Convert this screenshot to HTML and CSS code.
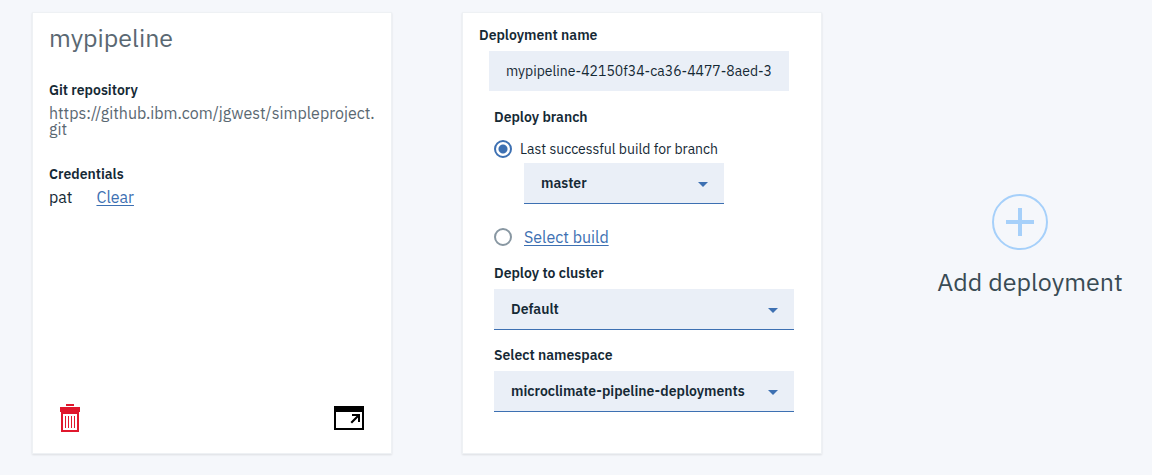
FILE: index.html
```html
<!DOCTYPE html>
<html lang="en">
<head>
<meta charset="utf-8">
<meta name="viewport" content="width=device-width, initial-scale=1">
<title>mypipeline</title>
<link rel="stylesheet" href="styles.css">
</head>
<body>
<main class="board">
  <section class="card pipeline">
    <h1 class="pipeline-name">mypipeline</h1>
    <h2 class="label">Git repository</h2>
    <p class="repo">https://github.ibm.com/jgwest/simpleproject.<wbr>git</p>
    <h2 class="label">Credentials</h2>
    <p class="credentials"><span>pat</span><a class="link" href="#">Clear</a></p>
    <div class="actions">
      <button class="icon-button" type="button" aria-label="Delete pipeline">
        <svg width="20" height="28" viewBox="0 0 20 28" fill="#e0182d" shape-rendering="crispEdges" aria-hidden="true">
          <path d="M6 0h8v2H6zM0 3h20v5h-1v20H1V8H0z"/>
          <path fill="#fff" d="M3 10h14v16H3z"/>
          <path d="M5 12h1v12H5zM8 12h1v12H8zM11 12h1v12h-1zM14 12h1v12h-1z"/>
        </svg>
      </button>
      <button class="icon-button" type="button" aria-label="Open pipeline">
        <svg width="30" height="24" viewBox="0 0 30 24" aria-hidden="true">
          <path fill-rule="evenodd" d="M0 0h30v24H0zM2 6v16h26V6z"/>
          <path d="M18 8h8v8h-2v-4.500l-6 6-1.500-1.500L22.500 10H18z"/>
        </svg>
      </button>
    </div>
  </section>

  <form class="card deployment">
    <label class="label" for="name">Deployment name</label>
    <input class="field name-field" id="name" type="text" value="mypipeline-42150f34-ca36-4477-8aed-3">
    <div class="options">
      <fieldset class="branch">
        <legend class="label">Deploy branch</legend>
        <div class="choice">
          <input class="radio" type="radio" name="source" id="last" checked>
          <label for="last">Last successful build for branch</label>
        </div>
        <div class="select-wrap branch-select">
          <select class="field select" aria-label="Branch"><option>master</option></select>
          <svg class="caret" width="10" height="5" viewBox="0 0 10 5" aria-hidden="true"><path d="M0 0h10L5 5z"/></svg>
        </div>
        <div class="choice build">
          <input class="radio" type="radio" name="source" id="build" aria-label="Select build">
          <a class="link" href="#">Select build</a>
        </div>
      </fieldset>
      <label class="label" for="cluster">Deploy to cluster</label>
      <div class="select-wrap">
        <select class="field select" id="cluster"><option>Default</option></select>
        <svg class="caret" width="10" height="5" viewBox="0 0 10 5" aria-hidden="true"><path d="M0 0h10L5 5z"/></svg>
      </div>
      <label class="label" for="namespace">Select namespace</label>
      <div class="select-wrap">
        <select class="field select" id="namespace"><option>microclimate-pipeline-deployments</option></select>
        <svg class="caret" width="10" height="5" viewBox="0 0 10 5" aria-hidden="true"><path d="M0 0h10L5 5z"/></svg>
      </div>
    </div>
  </form>

  <div class="add">
    <button class="add-button" type="button">
      <svg class="add-icon" width="56" height="56" viewBox="0 0 56 56" fill="none" stroke="#a6d0fa" aria-hidden="true">
        <circle cx="28" cy="28" r="27" stroke-width="2"/>
        <path stroke-width="4" d="M14 28h28M28 14v28"/>
      </svg>
      <span>Add deployment</span>
    </button>
  </div>
</main>
</body>
</html>
```
FILE: styles.css
```css
* { box-sizing: border-box; }

body {
  margin: 0;
  background: #f5f7fb;
  color: #152935;
  font-family: "IBM Plex Sans", Roboto, "Liberation Sans", sans-serif;
  font-size: 14px;
  line-height: 16px;
}

h1, h2, p { margin: 0; }
button, input, select { font: inherit; color: inherit; }
button { border: 0; padding: 0; background: none; cursor: pointer; }

.board {
  display: grid;
  grid-template-columns: minmax(0, 360px) minmax(0, 360px) minmax(200px, 1fr);
  column-gap: 70px;
  padding: 12px 0 20px 32px;
}

.card {
  display: flex;
  flex-direction: column;
  padding: 14px 16px 16px;
  background: #fff;
  border: 1px solid #eef1f4;
  box-shadow: 0 1px 2px rgba(0, 0, 0, 0.1);
}

.label {
  display: block;
  padding: 0;
  font-size: 14px;
  line-height: 16px;
  font-weight: 600;
}

.link {
  color: #3d70b2;
  font-size: 16px;
  text-underline-offset: 2px;
}

.pipeline-name {
  margin: -4px 0 29px;
  color: #5a6872;
  font-size: 25px;
  line-height: 30px;
  font-weight: 400;
}

.repo {
  margin: 7px 0 29px;
  color: #5a6872;
  font-size: 16px;
}

.credentials {
  display: flex;
  gap: 24px;
  margin-top: 7px;
  font-size: 16px;
}

.actions {
  display: flex;
  justify-content: space-between;
  align-items: center;
  margin-top: auto;
  padding: 0 11px 5px;
}

.icon-button { display: flex; }

.field {
  width: 100%;
  height: 40px;
  padding: 0 17px;
  border: 0;
  border-radius: 0;
  background: #eaeff7;
}

.name-field {
  width: auto;
  margin: 8px 16px 18px 10px;
}

.options { padding: 0 11px 8px 15px; }

.branch {
  min-width: 0;
  margin: 0 0 19px;
  padding: 0;
  border: 0;
}

.choice {
  display: flex;
  align-items: center;
  gap: 8px;
  margin-top: 15px;
  line-height: 18px;
}

.build {
  gap: 12px;
  margin-top: 24px;
}

.radio {
  appearance: none;
  flex: none;
  width: 18px;
  height: 18px;
  margin: 0;
  border: 2px solid #8897a2;
  border-radius: 50%;
}

.radio:checked {
  border-color: #3d70b2;
  background: radial-gradient(circle, #3d70b2 4px, #fff 5px);
}

.select-wrap {
  position: relative;
  margin: 8px 0 17px;
}

.branch-select {
  width: 200px;
  margin: 5px 0 0 30px;
}

.select {
  appearance: none;
  display: block;
  height: 41px;
  border-bottom: 1px solid #3d70b2;
  font-weight: 600;
}

.caret {
  position: absolute;
  right: 16px;
  top: 19px;
  fill: #3d70b2;
  pointer-events: none;
}

.add {
  display: flex;
  align-items: center;
  justify-content: center;
  padding: 26px 0 0 16px;
}

.add-button {
  display: flex;
  flex-direction: column;
  align-items: center;
  gap: 16px;
  color: #394b54;
  font-size: 25px;
  line-height: 32px;
}

.add-icon { margin-right: 20px; }
```
